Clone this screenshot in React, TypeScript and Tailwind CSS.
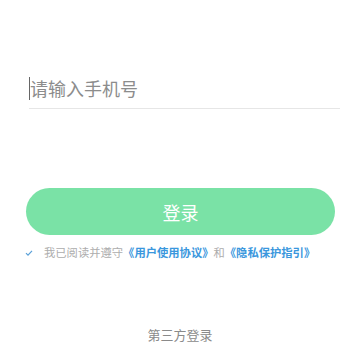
const font = { fontFamily: '"Noto Sans CJK SC", "Noto Sans", sans-serif' }

export default function App() {
    return (
        <div className="w-[360px] h-[360px] bg-white overflow-hidden flex flex-col" style={font}>
            <div className="ml-[29px] mt-[74px] w-[311px] h-[35px] pb-[6px] flex items-center border-b border-[#e6e6e6]">
                <span className="w-px h-[23px] bg-[#666]" />
                <span className="text-[18px] leading-none text-[#8c8c8c]">请输入手机号</span>
            </div>

            <button className="mt-[79px] ml-[26px] w-[309px] h-[47px] rounded-full bg-[#7ae2a6] text-white text-[18px] leading-none flex items-center justify-center">
                登录
            </button>

            <div className="mt-[12px] ml-[25px] flex items-center text-[11.3px] leading-none whitespace-nowrap">
                <svg width="8" height="8" viewBox="0 0 8 8" className="mr-[11px]">
                    <path d="M1 4.2 L3 6.2 L7 1.8" fill="none" stroke="#5aa0d8" strokeWidth="1.2" />
                </svg>
                <span className="text-[#adadad]">我已阅读并遵守</span>
                <span className="text-[#3a97dd] font-bold">《用户使用协议》</span>
                <span className="text-[#adadad]">和</span>
                <span className="text-[#3a97dd] font-bold">《隐私保护指引》</span>
            </div>

            <p className="mt-[70px] text-center text-[13px] leading-none text-[#8a8a8a]">第三方登录</p>
        </div>
    )
}
